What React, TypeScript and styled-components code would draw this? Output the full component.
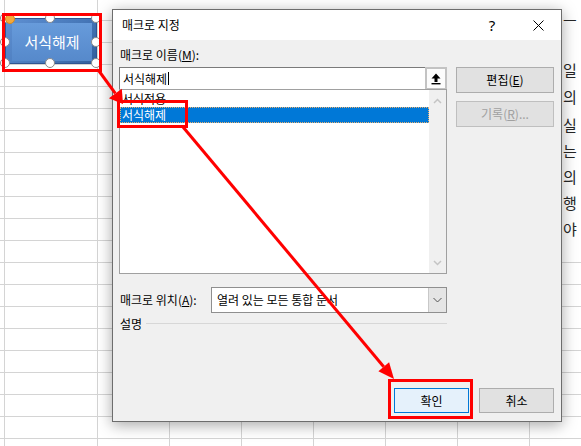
import * as React from "react";
import styled, { createGlobalStyle, css } from "styled-components";

const GlobalStyle = createGlobalStyle`
  html, body {
    margin: 0;
    padding: 0;
    background: #fff;
  }
  body {
    font-family: "Noto Sans CJK KR", "Noto Sans", sans-serif;
  }
`;

const Page = styled.div`
  position: relative;
  width: 581px;
  height: 446px;
  overflow: hidden;
  background: #fff;
`;

// spreadsheet grid behind everything
const Sheet = styled.div`
  position: absolute;
  inset: 0;
  display: flex;
  padding-left: 4px;
  overflow: hidden;
  background-image: linear-gradient(to bottom, #d4d4d4 1px, transparent 1px);
  background-size: 100% 22px;
  background-position: 0 20px;
`;

const SheetColumn = styled.div<{ $w: number }>`
  flex: none;
  box-sizing: border-box;
  width: ${p => p.$w}px;
  border-left: 1px solid #d4d4d4;
`;

// document text partly hidden by the dialog
const TextPanel = styled.div`
  position: absolute;
  left: 112px;
  top: 0;
  right: 0;
  height: 256px;
  background: #fff;
  display: flex;
  flex-direction: column;
  align-items: flex-end;
  padding: 10px 2px 0 0;
  box-sizing: border-box;
`;

const PanelLine = styled.div<{ $h: number; $gap?: number }>`
  width: 16px;
  height: ${p => p.$h}px;
  line-height: ${p => p.$h}px;
  margin-bottom: ${p => p.$gap || 0}px;
  font-size: 15px;
  color: #262626;
  white-space: nowrap;
`;

const ShapeWrap = styled.div`
  position: absolute;
  left: 5px;
  top: 18px;
  width: 92px;
  height: 46px;
`;

const Bevel = styled.div`
  box-sizing: border-box;
  width: 100%;
  height: 100%;
  display: flex;
  border: 1px solid #2f5592;
  background: linear-gradient(135deg, #5f90d2 0%, #4677b8 60%, #335f9c 100%);
  padding: 4px 4px 2px 6px;
`;

const BevelFace = styled.div`
  flex: 1;
  display: flex;
  align-items: center;
  justify-content: center;
  background: linear-gradient(#679bdb, #5689cb);
  color: #fff;
  font-size: 15px;
  line-height: 18px;
`;

const Handle = styled.span<{ $x: number; $y: number; $adjust?: boolean }>`
  position: absolute;
  left: ${p => p.$x - 5}px;
  top: ${p => p.$y - 5}px;
  width: 10px;
  height: 10px;
  box-sizing: border-box;
  border-radius: 50%;
  background: #fff;
  border: 1px solid #8a8a8a;
  ${p =>
    p.$adjust &&
    css`
      background: #f5a93b;
      border-color: #d88a1c;
    `}
`;

const Dialog = styled.div`
  position: absolute;
  left: 112px;
  top: 9px;
  width: 450px;
  height: 413px;
  box-sizing: border-box;
  border: 1px solid #6d6d6d;
  background: #f0f0f0;
  box-shadow: 0 3px 14px rgba(0, 0, 0, 0.35);
  display: flex;
  flex-direction: column;
  font-size: 12px;
  color: #000;
  z-index: 5;
`;

const TitleBar = styled.div`
  height: 30px;
  flex: none;
  display: flex;
  align-items: center;
  background: #fff;
  padding-left: 9px;
`;

const Title = styled.div`
  flex: 1;
  line-height: 16px;
`;

const TitleButton = styled.div`
  width: 46px;
  height: 30px;
  display: flex;
  align-items: center;
  justify-content: center;
  font-family: "Noto Sans", sans-serif;
  font-size: 15px;
`;

const Body = styled.div`
  flex: 1;
  display: flex;
  flex-direction: column;
  padding: 7px 7px 8px 6px;
`;

const TopSection = styled.div`
  display: flex;
  gap: 9px;
`;

const Main = styled.div`
  width: 328px;
  display: flex;
  flex-direction: column;
`;

const Side = styled.div`
  width: 98px;
  display: flex;
  flex-direction: column;
  gap: 8px;
  padding-top: 20px;
`;

const FieldLabel = styled.div`
  height: 16px;
  line-height: 16px;
  padding-left: 1px;
  white-space: nowrap;
`;

const NameBox = styled.div`
  margin-top: 4px;
  height: 23px;
  display: flex;
`;

const NameInput = styled.div`
  flex: 1;
  display: flex;
  align-items: center;
  box-sizing: border-box;
  border: 1px solid #7a7a7a;
  border-right: none;
  background: #fff;
  padding-left: 3px;
  line-height: 16px;
`;

const Caret = styled.span`
  display: inline-block;
  width: 1px;
  height: 13px;
  margin-left: 1px;
  background: #000;
`;

const UploadButton = styled.div`
  width: 22px;
  box-sizing: border-box;
  border: 2px solid #c3c3c3;
  background: #fcfcfc;
  display: flex;
  align-items: center;
  justify-content: center;
`;

const MacroList = styled.div`
  margin-top: -1px;
  height: 185px;
  box-sizing: border-box;
  border: 1px solid #a0a0a0;
  background: #fff;
  display: flex;
`;

const ListItems = styled.div`
  flex: 1;
  padding-top: 1px;
`;

const ListItem = styled.div<{ $selected?: boolean }>`
  height: 16px;
  line-height: 16px;
  padding-left: 2px;
  ${p =>
    p.$selected &&
    css`
      background: #0078d7;
      color: #fff;
      outline: 1px dotted #e8b070;
      outline-offset: -1px;
    `}
`;

const ScrollTrack = styled.div`
  width: 17px;
  background: #f0f0f0;
  display: flex;
  flex-direction: column;
  align-items: center;
  justify-content: space-between;
  padding: 8px 0 7px;
`;

const LocationRow = styled.div`
  margin-top: 13px;
  height: 26px;
  display: flex;
  align-items: center;
`;

const LocationLabel = styled.div`
  width: 92px;
  padding-left: 1px;
  box-sizing: border-box;
  line-height: 16px;
  white-space: nowrap;
`;

const Combo = styled.div`
  flex: 1;
  height: 100%;
  box-sizing: border-box;
  border: 1px solid #8f8f8f;
  background: #fff;
  display: flex;
`;

const ComboText = styled.div`
  flex: 1;
  display: flex;
  align-items: center;
  padding-left: 5px;
  line-height: 16px;
`;

const ComboButton = styled.div`
  width: 17px;
  background: #e5e5e5;
  border-left: 1px solid #c8c8c8;
  display: flex;
  align-items: center;
  justify-content: center;
`;

const DescRow = styled.div`
  margin-top: 2px;
  height: 16px;
  display: flex;
  align-items: center;
  gap: 4px;
  padding-left: 1px;
`;

const DescRule = styled.div`
  flex: 1;
  height: 1px;
  background: #d7d7d7;
`;

const Footer = styled.div`
  margin-top: auto;
  display: flex;
  justify-content: flex-end;
  gap: 10px;
`;

const DialogButton = styled.button<{ $default?: boolean; $w?: number }>`
  width: ${p => p.$w || 98}px;
  height: ${p => (p.$w ? 25 : 26)}px;
  box-sizing: border-box;
  border: 1px solid #adadad;
  background: #e1e1e1;
  font-family: inherit;
  font-size: 12px;
  line-height: 16px;
  color: #000;
  padding: 0;
  ${p =>
    p.$default &&
    css`
      border-color: #0078d7;
      background: #e5f1fb;
    `}
  &:disabled {
    color: #a0a0a0;
    border-color: #bfbfbf;
  }
`;

const Annotations = styled.svg`
  position: absolute;
  left: 0;
  top: 0;
  z-index: 10;
  pointer-events: none;
`;

const RED = "#ff0000";

function arrowParts(x1: number, y1: number, x2: number, y2: number, len: number, half: number) {
  const dx = x2 - x1;
  const dy = y2 - y1;
  const d = Math.hypot(dx, dy);
  const ux = dx / d;
  const uy = dy / d;
  const bx = x2 - ux * len;
  const by = y2 - uy * len;
  const head = `${x2},${y2} ${bx - uy * half},${by + ux * half} ${bx + uy * half},${by - ux * half}`;
  return { bx, by, head };
}

const Arrow: React.FC<{ x1: number; y1: number; x2: number; y2: number; len: number; half: number }> = ({
  x1,
  y1,
  x2,
  y2,
  len,
  half,
}) => {
  const { bx, by, head } = arrowParts(x1, y1, x2, y2, len, half);
  return (
    <>
      <line x1={x1} y1={y1} x2={bx} y2={by} stroke={RED} strokeWidth={3} />
      <polygon points={head} fill={RED} />
    </>
  );
};

const sheetColumns = [93, 72, 72, 72, 72, 72, 72, 72];

const handles = [
  [0, 0],
  [45, 0],
  [91, 0],
  [0, 24],
  [91, 24],
  [0, 45],
  [45, 45],
  [91, 45],
];

const App: React.FC = () => {
  return (
    <>
      <GlobalStyle />
      <Page>
        <Sheet>
          {sheetColumns.map((w, i) => (
            <SheetColumn key={i} $w={w} />
          ))}
        </Sheet>

        <TextPanel>
          <PanelLine $h={20} $gap={26}>
            ㅡ
          </PanelLine>
          <PanelLine $h={27}>일</PanelLine>
          <PanelLine $h={28}>의</PanelLine>
          <PanelLine $h={27}>실</PanelLine>
          <PanelLine $h={26}>는</PanelLine>
          <PanelLine $h={26}>의</PanelLine>
          <PanelLine $h={26}>행</PanelLine>
          <PanelLine $h={26}>야</PanelLine>
        </TextPanel>

        <ShapeWrap>
          <Bevel>
            <BevelFace>서식해제</BevelFace>
          </Bevel>
          {handles.map(([x, y], i) => (
            <Handle key={i} $x={x} $y={y} />
          ))}
          <Handle $x={5} $y={1} $adjust />
        </ShapeWrap>

        <Dialog>
          <TitleBar>
            <Title>매크로 지정</Title>
            <TitleButton>?</TitleButton>
            <TitleButton>
              <svg width="11" height="11" viewBox="0 0 11 11">
                <path d="M0.5 0.5 L10.5 10.5 M10.5 0.5 L0.5 10.5" stroke="#000" strokeWidth="1" />
              </svg>
            </TitleButton>
          </TitleBar>
          <Body>
            <TopSection>
              <Main>
                <FieldLabel>
                  매크로 이름(<u>M</u>):
                </FieldLabel>
                <NameBox>
                  <NameInput>
                    서식해제
                    <Caret />
                  </NameInput>
                  <UploadButton>
                    <svg width="10" height="12" viewBox="0 0 10 12">
                      <path d="M5 0.5 L9.5 5.5 L6.5 5.5 L6.5 9 L3.5 9 L3.5 5.5 L0.5 5.5 Z" fill="#000" />
                      <rect x="0.5" y="10" width="9" height="1.4" fill="#000" />
                    </svg>
                  </UploadButton>
                </NameBox>
                <MacroList>
                  <ListItems>
                    <ListItem>서식적용</ListItem>
                    <ListItem $selected>서식해제</ListItem>
                  </ListItems>
                  <ScrollTrack>
                    <svg width="9" height="6" viewBox="0 0 9 6">
                      <polyline points="1,5 4.5,1.5 8,5" fill="none" stroke="#c4c4c4" strokeWidth="1.5" />
                    </svg>
                    <svg width="9" height="6" viewBox="0 0 9 6">
                      <polyline points="1,1 4.5,4.5 8,1" fill="none" stroke="#c4c4c4" strokeWidth="1.5" />
                    </svg>
                  </ScrollTrack>
                </MacroList>
                <LocationRow>
                  <LocationLabel>
                    매크로 위치(<u>A</u>):
                  </LocationLabel>
                  <Combo>
                    <ComboText>열려 있는 모든 통합 문서</ComboText>
                    <ComboButton>
                      <svg width="9" height="6" viewBox="0 0 9 6">
                        <polyline points="0.5,1 4.5,5 8.5,1" fill="none" stroke="#555" strokeWidth="1" />
                      </svg>
                    </ComboButton>
                  </Combo>
                </LocationRow>
                <DescRow>
                  <span>설명</span>
                  <DescRule />
                </DescRow>
              </Main>
              <Side>
                <DialogButton>
                  편집(<u>E</u>)
                </DialogButton>
                <DialogButton disabled>
                  기록(<u>R</u>)...
                </DialogButton>
              </Side>
            </TopSection>
            <Footer>
              <DialogButton $default $w={75}>
                확인
              </DialogButton>
              <DialogButton $w={75}>취소</DialogButton>
            </Footer>
          </Body>
        </Dialog>

        <Annotations width="581" height="446" viewBox="0 0 581 446">
          <rect x="3.5" y="14.5" width="97" height="56" fill="none" stroke={RED} strokeWidth="3" />
          <rect x="118.5" y="101.5" width="68" height="25" fill="none" stroke={RED} strokeWidth="3" />
          <rect x="389.5" y="380.5" width="82" height="37" fill="none" stroke={RED} strokeWidth="3" />
          <Arrow x1={99} y1={71} x2={123} y2={104} len={13} half={8} />
          <Arrow x1={183} y1={127} x2={394} y2={379} len={16} half={7} />
        </Annotations>
      </Page>
    </>
  );
};

export default App;
